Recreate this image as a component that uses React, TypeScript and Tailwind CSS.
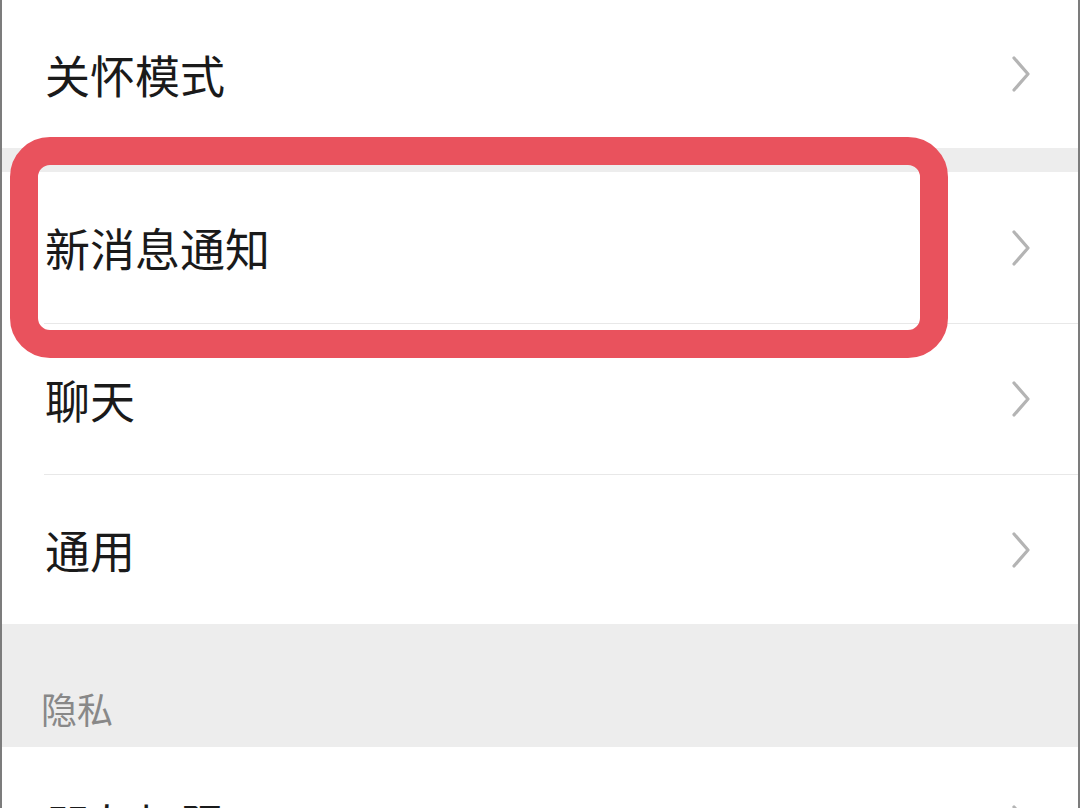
import React from 'react';

const Chevron: React.FC = () => (
  <svg width="20" height="36" viewBox="0 0 20 36" fill="none" className="shrink-0">
    <polyline points="3,2 17,18 3,34" stroke="#b4b4b4" strokeWidth="3.2" strokeLinecap="round" strokeLinejoin="round" />
  </svg>
);

const Row: React.FC<{ label: string; divider?: boolean; h: string }> = ({ label, divider, h }) => (
  <div className="bg-white">
    <div className={`flex items-center justify-between pl-[43px] pr-[47px] ${h}`}>
      <span className="text-[45px] leading-none text-[#1a1a1a]">{label}</span>
      <Chevron />
    </div>
    {divider && <div className="ml-[42px] h-px bg-[#e8e8e8]" />}
  </div>
);

export default function App() {
  return (
    <div
      className="relative h-[808px] w-full overflow-hidden border-x-2 border-[#7c7c7c] bg-[#ededed]"
      style={{ fontFamily: '"Noto Sans CJK SC", "Noto Sans", sans-serif' }}
    >
      <Row label="关怀模式" h="h-[148px]" />
      <div className="h-[24px]" />
      <Row label="新消息通知" h="h-[151px]" divider />
      <Row label="聊天" h="h-[150px]" divider />
      <Row label="通用" h="h-[149px]" />
      <div className="flex h-[123px] items-end pb-[21px] pl-[39px]">
        <span className="text-[36px] leading-none text-[#888888]">隐私</span>
      </div>
      <Row label="朋友权限" h="h-[152px]" />

      <div className="pointer-events-none absolute left-[8px] top-[137px] h-[221px] w-[938px] rounded-[40px] border-[28px] border-[#e9525d]" />
    </div>
  );
}
